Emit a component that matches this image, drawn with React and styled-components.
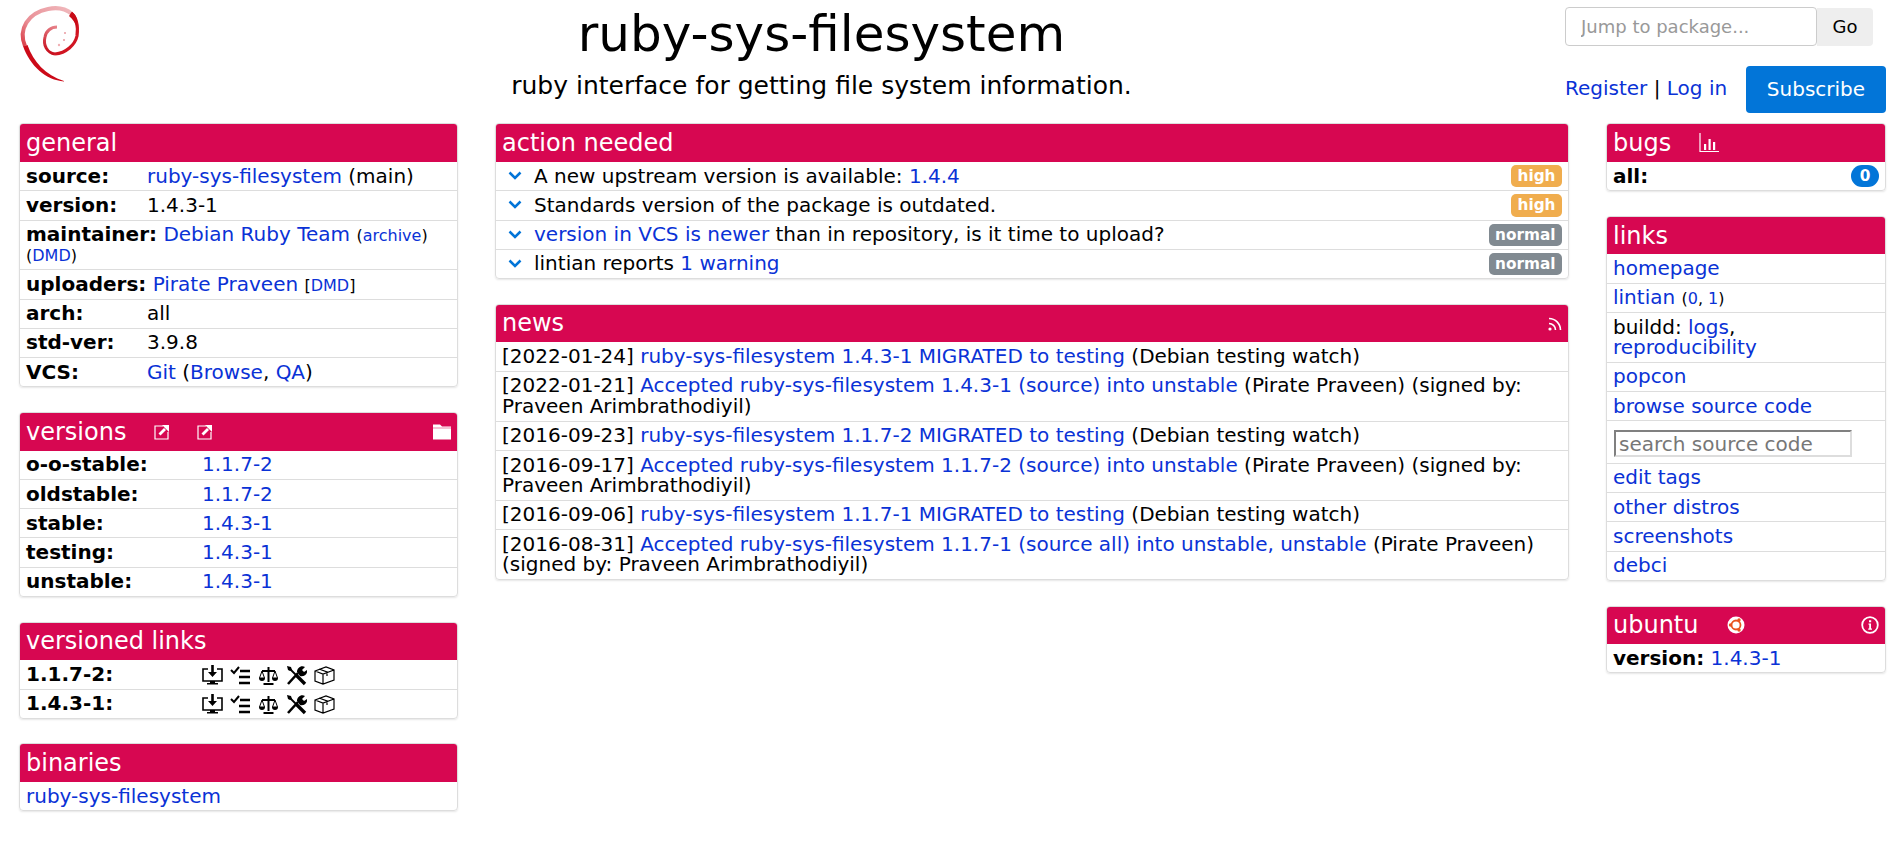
import React from 'react'
import styled, { createGlobalStyle } from 'styled-components'

const LINK = '#0a32d6'
const DEBIAN = '#d70751'

const GlobalStyle = createGlobalStyle`
  html, body {
    margin: 0;
    padding: 0;
    background: #fff;
    color: #000;
    font-family: "DejaVu Sans", sans-serif;
    font-size: 20px;
    line-height: 1.01;
  }
  a {
    color: ${LINK};
    text-decoration: none;
  }
`
const Page = styled.div`
  width: 1899px;
  height: 846px;
  overflow: hidden;
`
const Header = styled.header`
  display: flex;
  height: 123.4px;
  padding: 0 13px 0 20px;
  box-sizing: border-box;
`
const Logo = styled.svg`
  width: 62px;
  height: 82px;
  flex: none;
  margin-top: 4px;
  overflow: visible;
`
const Titles = styled.div`
  flex: 1;
  text-align: center;
  margin-left: -4px;
`
const Title = styled.h1`
  margin: 6px 0 0;
  font-size: 50px;
  font-weight: 400;
  line-height: 56px;
`
const Subtitle = styled.h2`
  margin: 11px 0 0;
  font-size: 25px;
  font-weight: 400;
  line-height: 26px;
`
const Account = styled.div`
  width: 321px;
  flex: none;
`
const SearchForm = styled.form`
  display: flex;
  margin-top: 7px;
`
const JumpInput = styled.input`
  width: 252px;
  height: 39px;
  box-sizing: border-box;
  padding: 0 15px;
  border: 1px solid #ccc;
  border-radius: 4px;
  font: inherit;
  font-size: 18px;
  &::placeholder {
    color: #999;
  }
`
const GoButton = styled.button`
  width: 56px;
  height: 38px;
  margin-top: 1px;
  border: 0;
  border-radius: 0 4px 4px 0;
  background: #eee;
  color: #000;
  font: inherit;
  font-size: 18px;
`
const AccountRow = styled.div`
  display: flex;
  align-items: flex-start;
  justify-content: space-between;
  margin-top: 20px;
`
const AccountLinks = styled.div`
  margin-top: 12px;
`
const Subscribe = styled.button`
  width: 140px;
  height: 47px;
  border: 0;
  border-radius: 4px;
  background: #0275d8;
  color: #fff;
  font: inherit;
  font-size: 20px;
`
const Columns = styled.main`
  display: grid;
  grid-template-columns: 439px 1fr 280px;
  column-gap: 37px;
  padding: 0 13px 0 19px;
  align-items: start;
`
const Column = styled.div`
  display: flex;
  flex-direction: column;
  gap: 24.6px;
`
const Panel = styled.section`
  border: 1px solid #ddd;
  border-radius: 4px;
  box-shadow: 0 1px 2px rgba(0, 0, 0, 0.1);
  overflow: hidden;
`
const PanelHead = styled.div`
  display: flex;
  align-items: center;
  height: 37.6px;
  padding: 0 6px;
  background: ${DEBIAN};
  color: #fff;
  font-size: 24px;
`
const HeadIcon = styled.svg`
  width: ${(p) => p.$size || 16}px;
  height: ${(p) => p.$size || 16}px;
  margin-left: ${(p) => p.$gap || 0}px;
  flex: none;
`
const HeadEnd = styled.span`
  margin-left: auto;
  display: flex;
`
const Row = styled.div`
  display: flex;
  align-items: flex-start;
  padding: 3.6px 6px 4.4px;
  line-height: 20.3px;
  border-top: 1px solid #ddd;
  ${PanelHead} + & {
    border-top: 0;
  }
`
const WrapRow = styled(Row)`
  display: block;
  padding-bottom: 4.6px;
`
const Label = styled.b`
  display: inline-block;
  min-width: ${(p) => p.$w || 0}px;
  font-weight: 700;
`
const Small = styled.small`
  font-size: 16px;
  line-height: 1;
`
const Chevron = styled.svg`
  width: 14px;
  height: 9px;
  flex: none;
  margin: 5.4px 12px 0 6px;
`
const Grow = styled.span`
  flex: 1;
`
const Badge = styled.span`
  flex: none;
  margin: -0.6px 0 -4px;
  padding: 2px 6.5px;
  border-radius: 5px;
  background: ${(p) => p.$bg};
  color: #fff;
  font-size: 15.3px;
  font-weight: 700;
  line-height: 18.5px;
`
const Pill = styled(Badge)`
  margin-left: auto;
  min-width: 15px;
  text-align: center;
  border-radius: 12px;
`
const IconSet = styled.span`
  display: flex;
  gap: 7px;
  margin: 1px 0 -3px;
`
const ToolIcon = styled.svg`
  width: 21px;
  height: 21px;
  flex: none;
`
const SearchRow = styled(Row)`
  padding: 9px 6px 5.5px 7px;
`
const CodeInput = styled.input`
  width: 238px;
  height: 27px;
  box-sizing: border-box;
  padding: 0 3px;
  border-style: solid;
  border-width: 2px;
  border-color: #808080 #ddd #ddd #808080;
  border-radius: 0;
  font: inherit;
  font-size: 20px;
  &::placeholder {
    color: #777;
  }
`

const ExternalIcon = ({ gap }) => (
  <HeadIcon $size={16} $gap={gap} viewBox="0 0 16 16">
    <path d="M9 2H1v13h13V8" fill="none" stroke="#fff" strokeWidth="1.2" />
    <path d="M5.5 10.5 11 5" fill="none" stroke="#fff" strokeWidth="2.8" />
    <path d="M8 1h7v7z" fill="#fff" />
  </HeadIcon>
)

const MonitorIcon = () => (
  <ToolIcon viewBox="0 0 21 21">
    <path d="M6 4H1v12h19V4h-5" fill="none" stroke="#000" strokeWidth="1.6" />
    <path d="M9.2 0h2.6v7H15l-4.5 5L6 7h3.2zM8 16h5v2h3v1.6H5V18h3z" fill="#000" />
  </ToolIcon>
)

const ChecksIcon = () => (
  <ToolIcon viewBox="0 0 21 21">
    <path d="M1 5l3 3 5-6" fill="none" stroke="#000" strokeWidth="2" />
    <path d="M10 6h10M9 12h11M9 18h11" stroke="#000" strokeWidth="2.6" />
  </ToolIcon>
)

const ScaleIcon = () => (
  <ToolIcon viewBox="0 0 21 21">
    <path d="M10.5 2v15M4 6h13M5.5 19h10" stroke="#000" strokeWidth="2" fill="none" />
    <path d="M4 6 1.5 13h5zM17 6l-2.5 7h5z" fill="none" stroke="#000" strokeWidth="1" />
    <path d="M1 13a3 3 0 0 0 6 0zM14 13a3 3 0 0 0 6 0z" fill="#000" />
  </ToolIcon>
)

const ToolsIcon = () => (
  <ToolIcon viewBox="0 0 21 21">
    <path d="M4 4l6 6" stroke="#000" strokeWidth="1.8" />
    <path d="M10 10l9 9" stroke="#000" strokeWidth="3.4" />
    <path d="M1 1l4 1 1 3-2 1-2-1z" fill="#000" />
    <path d="M2 19 12 8" stroke="#000" strokeWidth="2.6" />
    <path d="M11 7c0-4 4-7 8-5l-3 3 2 2 3-2c1 4-3 7-7 6z" fill="#000" />
  </ToolIcon>
)

const BoxIcon = () => (
  <ToolIcon viewBox="0 0 21 21">
    <path d="M1 6l11-4 8 3v10L9 19l-8-3zM1 6l8 3 11-4M9 9v10M5 4l8 3v4" fill="none" stroke="#000" strokeWidth="1.2" />
  </ToolIcon>
)

const ToolIcons = () => (
  <IconSet>
    <MonitorIcon />
    <ChecksIcon />
    <ScaleIcon />
    <ToolsIcon />
    <BoxIcon />
  </IconSet>
)

const ChevronDown = () => (
  <Chevron viewBox="0 0 14 9">
    <path d="M1.5 1.5 7 7l5.5-5.5" fill="none" stroke="#0275d8" strokeWidth="2.5" />
  </Chevron>
)

const actions = [
  { id: 1, badge: 'high', body: <>A new upstream version is available: <a href="#v">1.4.4</a></> },
  { id: 2, badge: 'high', body: <>Standards version of the package is outdated.</> },
  { id: 3, badge: 'normal', body: <><a href="#v">version in VCS is newer</a> than in repository, is it time to upload?</> },
  { id: 4, badge: 'normal', body: <>lintian reports <a href="#v">1 warning</a></> },
]

const news = [
  { date: '2022-01-24', link: 'ruby-sys-filesystem 1.4.3-1 MIGRATED to testing', rest: ' (Debian testing watch)' },
  { date: '2022-01-21', link: 'Accepted ruby-sys-filesystem 1.4.3-1 (source) into unstable', rest: ' (Pirate Praveen) (signed by: Praveen Arimbrathodiyil)' },
  { date: '2016-09-23', link: 'ruby-sys-filesystem 1.1.7-2 MIGRATED to testing', rest: ' (Debian testing watch)' },
  { date: '2016-09-17', link: 'Accepted ruby-sys-filesystem 1.1.7-2 (source) into unstable', rest: ' (Pirate Praveen) (signed by: Praveen Arimbrathodiyil)' },
  { date: '2016-09-06', link: 'ruby-sys-filesystem 1.1.7-1 MIGRATED to testing', rest: ' (Debian testing watch)' },
  { date: '2016-08-31', link: 'Accepted ruby-sys-filesystem 1.1.7-1 (source all) into unstable, unstable', rest: ' (Pirate Praveen) (signed by: Praveen Arimbrathodiyil)' },
]

const versions = [
  ['o-o-stable:', '1.1.7-2'],
  ['oldstable:', '1.1.7-2'],
  ['stable:', '1.4.3-1'],
  ['testing:', '1.4.3-1'],
  ['unstable:', '1.4.3-1'],
]

export default function App() {
  return (
    <Page>
      <GlobalStyle />
      <Header>
        <Logo viewBox="0 0 62 82">
          <defs>
            <linearGradient id="swirlTop" gradientUnits="userSpaceOnUse" x1="2" y1="45" x2="50" y2="5">
              <stop offset="0" stopColor="#d8323c" />
              <stop offset="0.35" stopColor="#e98e95" />
              <stop offset="1" stopColor="#f0b8bc" />
            </linearGradient>
            <linearGradient id="swirlInner" gradientUnits="userSpaceOnUse" x1="28" y1="48" x2="38" y2="22">
              <stop offset="0" stopColor="#c8101e" />
              <stop offset="1" stopColor="#e8868e" />
            </linearGradient>
          </defs>
          <path d="M44 77.5C26 76 10 62 3 42l4.5-1c6 17 18 30 36.500 36z" fill="#cc0a18" />
          <path d="M5 42C-2 25 8 9 28 5c9-2 18 0 24 5" fill="none" stroke="url(#swirlTop)" strokeWidth="4" />
          <path d="M51 9c6 5 7 15 6 23-2 9-11 17-22 18" fill="none" stroke="#d11522" strokeWidth="3.2" />
          <path d="M52 8c5 3 6 9 5 16-2-5-4-9-8-12z" fill="#c80a16" />
          <path d="M35 50c-8-1-12-9-10-17 1-6 6-10 12-10" fill="none" stroke="url(#swirlInner)" strokeWidth="3" />
          <circle cx="45" cy="29" r="1" fill="#e89aa0" />
          <circle cx="44" cy="36" r="1" fill="#e89aa0" />
          <circle cx="39" cy="41" r="1.2" fill="#f0b0b4" />
        </Logo>
        <Titles>
          <Title>ruby-sys-filesystem</Title>
          <Subtitle>ruby interface for getting file system information.</Subtitle>
        </Titles>
        <Account>
          <SearchForm>
            <JumpInput placeholder="Jump to package..." />
            <GoButton type="button">Go</GoButton>
          </SearchForm>
          <AccountRow>
            <AccountLinks>
              <a href="#r">Register</a> | <a href="#l">Log in</a>
            </AccountLinks>
            <Subscribe type="button">Subscribe</Subscribe>
          </AccountRow>
        </Account>
      </Header>
      <Columns>
        <Column>
          <Panel>
            <PanelHead>general</PanelHead>
            <Row><Label $w={121}>source:</Label><span><a href="#s">ruby-sys-filesystem</a> (main)</span></Row>
            <Row><Label $w={121}>version:</Label><span>1.4.3-1</span></Row>
            <WrapRow>
              <Label>maintainer:</Label> <a href="#m">Debian Ruby Team</a> <Small>(<a href="#a">archive</a>) (<a href="#d">DMD</a>)</Small>
            </WrapRow>
            <Row><span><Label>uploaders:</Label> <a href="#p">Pirate Praveen</a> <Small>[<a href="#d">DMD</a>]</Small></span></Row>
            <Row><Label $w={121}>arch:</Label><span>all</span></Row>
            <Row><Label $w={121}>std-ver:</Label><span>3.9.8</span></Row>
            <Row><Label $w={121}>VCS:</Label><span><a href="#g">Git</a> (<a href="#b">Browse</a>, <a href="#q">QA</a>)</span></Row>
          </Panel>
          <Panel>
            <PanelHead>
              versions
              <ExternalIcon gap={28} />
              <ExternalIcon gap={27} />
              <HeadEnd>
                <HeadIcon $size={18} viewBox="0 0 18 18">
                  <path d="M0 1.5h7l2 2h9v13H0z" fill="#fff" />
                  <path d="M0 5h18" stroke={DEBIAN} strokeWidth="0.5" />
                </HeadIcon>
              </HeadEnd>
            </PanelHead>
            {versions.map(([name, value]) => (
              <Row key={name}>
                <Label $w={176}>{name}</Label>
                <a href="#v">{value}</a>
              </Row>
            ))}
          </Panel>
          <Panel>
            <PanelHead>versioned links</PanelHead>
            <Row><Label $w={176}>1.1.7-2:</Label><ToolIcons /></Row>
            <Row><Label $w={176}>1.4.3-1:</Label><ToolIcons /></Row>
          </Panel>
          <Panel>
            <PanelHead>binaries</PanelHead>
            <Row><a href="#b">ruby-sys-filesystem</a></Row>
          </Panel>
        </Column>
        <Column>
          <Panel>
            <PanelHead>action needed</PanelHead>
            {actions.map((item) => (
              <Row key={item.id}>
                <ChevronDown />
                <Grow>{item.body}</Grow>
                <Badge $bg={item.badge === 'high' ? '#f0ad4e' : '#818a91'}>{item.badge}</Badge>
              </Row>
            ))}
          </Panel>
          <Panel>
            <PanelHead>
              news
              <HeadEnd>
                <HeadIcon $size={14} viewBox="0 0 14 14">
                  <circle cx="2" cy="12" r="1.6" fill="#fff" />
                  <path d="M1 6.5A6.5 6.5 0 0 1 7.5 13M1 1.5A11.5 11.5 0 0 1 12.5 13" fill="none" stroke="#fff" strokeWidth="1.6" />
                </HeadIcon>
              </HeadEnd>
            </PanelHead>
            {news.map((item) => (
              <WrapRow key={item.date}>
                [{item.date}] <a href="#n">{item.link}</a>{item.rest}
              </WrapRow>
            ))}
          </Panel>
        </Column>
        <Column>
          <Panel>
            <PanelHead>
              bugs
              <HeadIcon $size={20} $gap={28} viewBox="0 0 20 20">
                <path d="M1 0v18.5h19" fill="none" stroke="#fff" strokeWidth="1.2" />
                <path d="M5 11h2.2v6H5zM9.5 6h2.2v11H9.500zM14 9h2.2v8H14z" fill="#fff" />
              </HeadIcon>
            </PanelHead>
            <Row>
              <Label>all:</Label>
              <Pill $bg="#0275d8">0</Pill>
            </Row>
          </Panel>
          <Panel>
            <PanelHead>links</PanelHead>
            <Row><a href="#h">homepage</a></Row>
            <Row><span><a href="#l">lintian</a> <Small>(<a href="#0">0</a>, <a href="#1">1</a>)</Small></span></Row>
            <WrapRow>buildd: <a href="#b">logs</a>, <a href="#r">reproducibility</a></WrapRow>
            <Row><a href="#p">popcon</a></Row>
            <Row><a href="#c">browse source code</a></Row>
            <SearchRow><CodeInput placeholder="search source code" /></SearchRow>
            <Row><a href="#t">edit tags</a></Row>
            <Row><a href="#o">other distros</a></Row>
            <Row><a href="#s">screenshots</a></Row>
            <Row><a href="#d">debci</a></Row>
          </Panel>
          <Panel>
            <PanelHead>
              ubuntu
              <HeadIcon $size={18} $gap={28} viewBox="0 0 18 18">
                <circle cx="9" cy="9" r="8.5" fill="#fff" />
                <circle cx="9" cy="9" r="4.5" fill="none" stroke="#e95420" strokeWidth="1.8" />
                <circle cx="3.5" cy="9" r="1.7" fill="#e95420" />
                <circle cx="12" cy="4" r="1.7" fill="#e95420" />
                <circle cx="12" cy="14" r="1.7" fill="#e95420" />
              </HeadIcon>
              <HeadEnd>
                <HeadIcon $size={18} viewBox="0 0 18 18">
                  <circle cx="9" cy="9" r="7.8" fill="none" stroke="#fff" strokeWidth="1.8" />
                  <path d="M7.5 7.5H10v5h1v1.2H7.2v-1.2h1V8.7h-.7zM8 4.2h2.2v2H8z" fill="#fff" />
                </HeadIcon>
              </HeadEnd>
            </PanelHead>
            <Row><span><Label>version:</Label> <a href="#u">1.4.3-1</a></span></Row>
          </Panel>
        </Column>
      </Columns>
    </Page>
  )
}
